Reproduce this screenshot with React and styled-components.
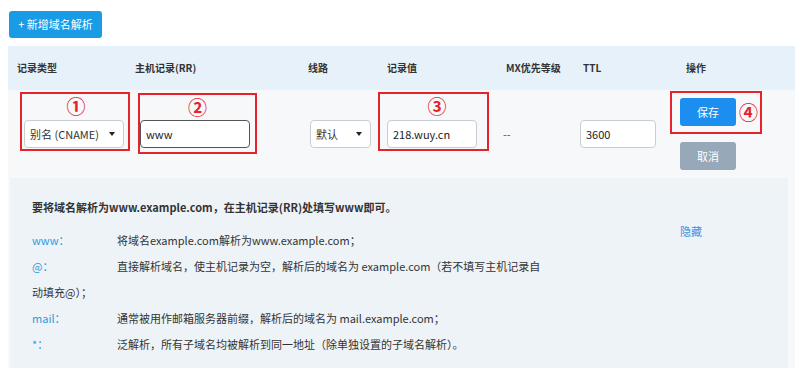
import React from "react";
import styled, { createGlobalStyle } from "styled-components";

const GlobalStyle = createGlobalStyle`
  body {
    margin: 0;
    background: #ffffff;
    font-family: "Noto Sans CJK SC", "Noto Sans", sans-serif;
    color: #333333;
  }
`;

const COLS = "118px 173px 79px 119px 77px 94px 127px";

const Page = styled.div`
  padding: 10px 0 0 8px;
`;

const AddButton = styled.button`
  margin-left: 1px;
  width: 93px;
  height: 27px;
  border: none;
  border-radius: 3px;
  background: #1a9be6;
  color: #ffffff;
  font-family: inherit;
  font-size: 11px;
  padding: 0;
`;

const Table = styled.div`
  margin-top: 8px;
  width: 787px;
`;

const HeadRow = styled.div`
  display: grid;
  grid-template-columns: ${COLS};
  height: 44px;
  align-items: center;
  background: #e7f1fa;
`;

const HeadCell = styled.div`
  padding-left: ${(p) => p.$indent || 9}px;
  font-size: 10px;
  font-weight: 700;
  color: #333333;
`;

const BodyRow = styled.div`
  display: grid;
  grid-template-columns: ${COLS};
  height: 88px;
  align-items: start;
  background: #f6f8fa;
`;

const Cell = styled.div`
  display: flex;
  flex-direction: column;
  align-items: flex-start;
  padding-left: ${(p) => p.$left || 0}px;
  padding-top: ${(p) => p.$top || 0}px;
`;

const Mark = styled.div`
  box-sizing: border-box;
  width: ${(p) => p.$w}px;
  height: ${(p) => p.$h}px;
  border: 2px solid #e5232b;
  display: flex;
  flex-direction: ${(p) => (p.$row ? "row" : "column")};
  align-items: ${(p) => (p.$row ? "center" : "stretch")};
  padding-left: ${(p) => p.$pad || 0}px;
`;

const Num = styled.div`
  height: ${(p) => (p.$row ? "auto" : "24px")};
  line-height: 24px;
  text-align: center;
  font-size: 19px;
  font-weight: 700;
  color: #e5232b;
  margin-bottom: ${(p) => p.$gap || 0}px;
  margin-left: ${(p) => p.$ml || 0}px;
`;

const Select = styled.div`
  box-sizing: border-box;
  width: ${(p) => p.$w}px;
  height: 28px;
  border: 1px solid #c9cdd2;
  border-radius: 4px;
  background: #ffffff;
  display: flex;
  align-items: center;
  justify-content: space-between;
  padding: 0 8px 0 5px;
  font-size: 11px;
  color: #333333;
`;

const Caret = styled.span`
  width: 0;
  height: 0;
  border-left: 3.5px solid transparent;
  border-right: 3.5px solid transparent;
  border-top: 4px solid #222222;
`;

const Field = styled.input`
  box-sizing: border-box;
  width: ${(p) => p.$w}px;
  height: 28px;
  border: 1px solid ${(p) => (p.$focus ? "#555555" : "#c9cdd2")};
  border-radius: 4px;
  background: #ffffff;
  padding: 0 5px;
  font-family: inherit;
  font-size: 11px;
  color: #222222;
  outline: none;
`;

const Dash = styled.div`
  line-height: 28px;
  font-size: 11px;
  color: #555555;
`;

const Btn = styled.button`
  width: 56px;
  height: 28px;
  border: none;
  border-radius: 3px;
  background: ${(p) => (p.$muted ? "#97a8b8" : "#1b8ef0")};
  color: #ffffff;
  font-family: inherit;
  font-size: 11px;
  padding: 0;
  margin-top: ${(p) => p.$top || 0}px;
  margin-left: ${(p) => p.$left || 0}px;
`;

const Expand = styled.div`
  background: #f6f8fa;
  padding: 0 7px 0 2px;
`;

const Panel = styled.div`
  display: flex;
  background: #eef3f8;
  padding: 16px 0 0 22px;
  height: 190px;
  box-sizing: border-box;
`;

const Notes = styled.div`
  width: 640px;
  font-size: 11px;
  color: #333333;
`;

const Intro = styled.div`
  line-height: 26px;
  font-weight: 700;
  margin-bottom: 7px;
`;

const Line = styled.div`
  line-height: 26px;
`;

const Label = styled.span`
  display: inline-block;
  width: 85px;
  color: #2d9cdb;
`;

const HideLink = styled.a`
  margin: 28px 0 0 8px;
  line-height: 18px;
  height: 18px;
  font-size: 11px;
  color: #3d8fe0;
`;

const items = [
  { label: "www：", text: "将域名example.com解析为www.example.com；" },
  {
    label: "@：",
    text: "直接解析域名，使主机记录为空，解析后的域名为 example.com（若不填写主机记录自",
    more: "动填充@）；",
  },
  { label: "mail：", text: "通常被用作邮箱服务器前缀，解析后的域名为 mail.example.com；" },
  { label: "*：", text: "泛解析，所有子域名均被解析到同一地址（除单独设置的子域名解析）。" },
];

export default function App() {
  return (
    <Page>
      <GlobalStyle />
      <AddButton>+ 新增域名解析</AddButton>
      <Table>
        <HeadRow>
          <HeadCell>记录类型</HeadCell>
          <HeadCell>主机记录(RR)</HeadCell>
          <HeadCell>线路</HeadCell>
          <HeadCell>记录值</HeadCell>
          <HeadCell>MX优先等级</HeadCell>
          <HeadCell>TTL</HeadCell>
          <HeadCell $indent={18}>操作</HeadCell>
        </HeadRow>
        <BodyRow>
          <Cell $left={12} $top={2}>
            <Mark $w={110} $h={59} $pad={2}>
              <Num $gap={2}>①</Num>
              <Select $w={100}>
                别名 (CNAME) <Caret />
              </Select>
            </Mark>
          </Cell>
          <Cell $left={12} $top={3}>
            <Mark $w={119} $h={61}>
              <Num $gap={1}>②</Num>
              <Field $w={110} $focus readOnly value="www" />
            </Mark>
          </Cell>
          <Cell $left={11} $top={30}>
            <Select $w={61}>
              默认 <Caret />
            </Select>
          </Cell>
          <Cell $top={2}>
            <Mark $w={111} $h={59} $pad={7}>
              <Num $gap={2}>③</Num>
              <Field $w={90} readOnly value="218.wuy.cn" />
            </Mark>
          </Cell>
          <Cell $left={6} $top={30}>
            <Dash>--</Dash>
          </Cell>
          <Cell $left={6} $top={30}>
            <Field $w={76} readOnly value="3600" />
          </Cell>
          <Cell $left={2} $top={1}>
            <Mark $w={92} $h={43} $pad={8} $row>
              <Btn>保存</Btn>
              <Num $row $ml={3}>④</Num>
            </Mark>
            <Btn $muted $top={8} $left={10}>
              取消
            </Btn>
          </Cell>
        </BodyRow>
        <Expand>
          <Panel>
            <Notes>
              <Intro>要将域名解析为www.example.com，在主机记录(RR)处填写www即可。</Intro>
              {items.map((it) => (
                <Line key={it.label}>
                  <Label>{it.label}</Label>
                  {it.text}
                  {it.more && (
                    <>
                      <br />
                      {it.more}
                    </>
                  )}
                </Line>
              ))}
            </Notes>
            <HideLink>隐藏</HideLink>
          </Panel>
        </Expand>
      </Table>
    </Page>
  );
}
